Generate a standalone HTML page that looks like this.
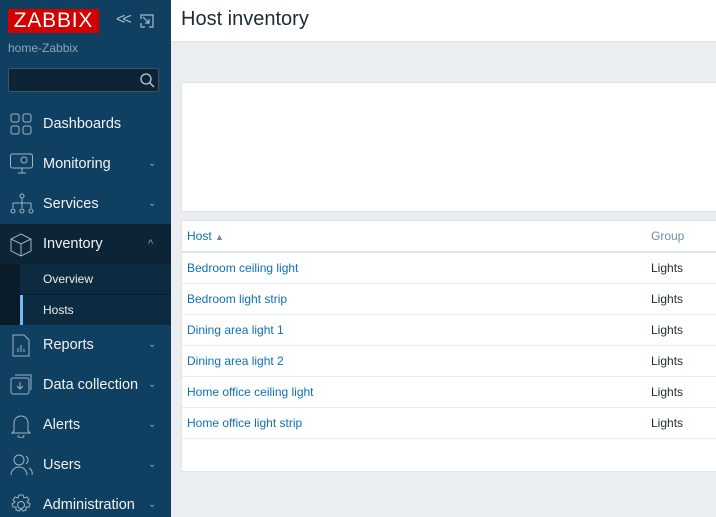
<!DOCTYPE html>
<html><head><style>
*{margin:0;padding:0;box-sizing:border-box}
html,body{width:716px;height:517px;overflow:hidden}
body{font-family:"Liberation Sans",Arial,sans-serif;background:#ebeef0;position:relative}
.sb{position:absolute;left:0;top:0;width:171px;height:517px;background:#0f3f61;color:#f2f2f2}
.logo{position:absolute;left:8px;top:9px;width:91px;height:24px;background:#d40000;color:#fff;font-size:21px;line-height:24px;text-align:center;letter-spacing:0.8px}
.srv{position:absolute;left:8px;top:41px;font-size:12px;color:#8fa6b8}
.search{position:absolute;left:8px;top:68px;width:151px;height:24px;background:#0c2436;border:1px solid #3f5566;border-radius:2px}
.item{position:absolute;left:0;width:171px;height:40px;font-size:14.5px;line-height:40px}
.item span{position:absolute;left:43px}
.item svg.ic{position:absolute;left:10px;top:9px}
.chev{position:absolute;left:148px;top:0;font-size:10px;color:#8fa6b8;font-weight:normal}
.sub{position:absolute;left:20px;width:151px;height:30px;background:#0d2b40;font-size:12px;line-height:30px;color:#eee}
.sub span{position:absolute;left:23px}
.hdr{position:absolute;left:171px;top:0;width:545px;height:42px;background:#fff;border-bottom:1px solid #dfe4e7}
.hdr h1{font-weight:normal;font-size:20px;position:absolute;left:10px;top:8px;color:#1f2c33}
.box{position:absolute;left:181px;width:540px;background:#fff;border:1px solid #dfe4e7}
.row{position:absolute;left:0;width:540px;height:31px;border-bottom:1px solid #ebeef0;font-size:12px;line-height:31px}
.row .h{position:absolute;left:5px;color:#0f6fb5}
.row .g{position:absolute;left:469px;color:#1f2c33}
</style></head><body>
<div class="sb">
<div class="logo">ZABBIX</div>
<div style="position:absolute;left:116px;top:11px;color:#a8bccb;font-size:16px;letter-spacing:-3px">&lt;&lt;</div>
<svg style="position:absolute;left:140px;top:14px" width="14" height="14"><path d="M1 5V1h12v12H9M1 9v4h4M3 3l6 6M9 5v4H5" fill="none" stroke="#a8bccb" stroke-width="1.2"/></svg>
<div class="srv">home-Zabbix</div>
<div class="search"><svg style="position:absolute;left:130px;top:3px" width="16" height="16"><circle cx="7" cy="7" r="5" fill="none" stroke="#c0ccd5" stroke-width="1.3"/><path d="M11 11l4 4" stroke="#c0ccd5" stroke-width="1.3"/></svg></div>
<div class="item" style="top:104px"><svg class="ic" width="22" height="22" fill="none" stroke="#9fb4c4"><rect x="1" y="1" width="8" height="8" rx="2"/><rect x="13" y="1" width="8" height="8" rx="2"/><rect x="1" y="13" width="8" height="8" rx="2"/><rect x="13" y="13" width="8" height="8" rx="2"/></svg><span>Dashboards</span></div>
<div class="item" style="top:144px"><svg class="ic" width="24" height="22" fill="none" stroke="#9fb4c4"><rect x="0.5" y="1" width="22" height="14" rx="2"/><path d="M8 20h8M12 15v5"/><circle cx="14" cy="7" r="3"/></svg><span>Monitoring</span><b class="chev">⌄</b></div>
<div class="item" style="top:184px"><svg class="ic" width="24" height="22" fill="none" stroke="#9fb4c4"><circle cx="12" cy="3" r="2"/><path d="M12 5v5M3 10h18M3 10v5M12 10v5M21 10v5"/><circle cx="3" cy="18" r="2"/><circle cx="12" cy="18" r="2"/><circle cx="21" cy="18" r="2"/></svg><span>Services</span><b class="chev">⌄</b></div>
<div style="position:absolute;left:0;top:224px;width:171px;height:101px;background:#0a1c2a"></div>
<div class="item" style="top:224px;background:#0c2436"><svg class="ic" width="22" height="24" fill="none" stroke="#9fb4c4"><path d="M11 1l10 5v12l-10 5-10-5V6zM1 6l10 5 10-5M11 11v12"/></svg><span>Inventory</span><b class="chev" style="font-size:11px">^</b></div>
<div class="sub" style="top:264px"><span>Overview</span></div>
<div class="sub" style="top:295px;border-left:3px solid #79b8f0"><span style="left:20px">Hosts</span></div>
<div class="item" style="top:325px"><svg class="ic" width="22" height="24" fill="none" stroke="#9fb4c4"><path d="M3 1h11l5 5v16H3zM8 18v-4M11 18v-7M14 18v-3"/></svg><span>Reports</span><b class="chev">⌄</b></div>
<div class="item" style="top:365px"><svg class="ic" width="24" height="22" fill="none" stroke="#9fb4c4"><rect x="1" y="4" width="18" height="16" rx="2"/><path d="M5 1h16v15M10 8v7M7 12l3 3 3-3"/></svg><span>Data collection</span><b class="chev">⌄</b></div>
<div class="item" style="top:405px"><svg class="ic" width="22" height="24" fill="none" stroke="#9fb4c4"><path d="M4 17V9a7 7 0 0114 0v8l2 2H2zM8 21a3 3 0 006 0"/></svg><span>Alerts</span><b class="chev">⌄</b></div>
<div class="item" style="top:445px"><svg class="ic" width="24" height="22" fill="none" stroke="#9fb4c4"><circle cx="9" cy="6" r="5"/><path d="M1 21a8 8 0 0116 0M16 2a5 5 0 010 8M19 14a6 6 0 013 7"/></svg><span>Users</span><b class="chev">⌄</b></div>
<div class="item" style="top:485px"><svg class="ic" width="22" height="22" fill="none" stroke="#9fb4c4"><circle cx="11" cy="11" r="3.5"/><path d="M9 1h4l1 3 3-1 2 3-2 2 3 2-1 3-3 0 0 3-3 1-2-2-2 2-3-1 0-3-3 0-1-3 3-2-2-2 2-3 3 1z"/></svg><span>Administration</span><b class="chev">⌄</b></div>
</div>
<div class="hdr"><h1>Host inventory</h1></div>
<div class="box" style="top:82px;height:130px"></div>
<div class="box" style="top:220px;height:252px">
<div class="row" style="top:0;border-bottom:2px solid #dfe4e7;height:32px;line-height:30px"><span class="h">Host <span style="font-size:9px;color:#768d99">▲</span></span><span class="g" style="color:#768d99">Group</span></div>
<div class="row" style="top:32px"><span class="h">Bedroom ceiling light</span><span class="g">Lights</span></div>
<div class="row" style="top:63px"><span class="h">Bedroom light strip</span><span class="g">Lights</span></div>
<div class="row" style="top:94px"><span class="h">Dining area light 1</span><span class="g">Lights</span></div>
<div class="row" style="top:125px"><span class="h">Dining area light 2</span><span class="g">Lights</span></div>
<div class="row" style="top:156px"><span class="h">Home office ceiling light</span><span class="g">Lights</span></div>
<div class="row" style="top:187px"><span class="h">Home office light strip</span><span class="g">Lights</span></div>
</div>
</body></html>
